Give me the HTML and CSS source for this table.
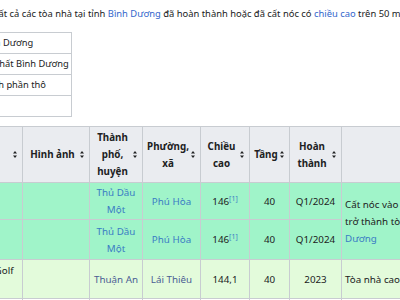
FILE: index.html
```html
<!DOCTYPE html>
<html lang="vi">
<head>
<meta charset="utf-8">
<link rel="stylesheet" href="styles.css">
</head>
<body>
<div class="page">
  <p class="intro">Tất cả các tòa nhà tại tỉnh <a href="#">Bình Dương</a> đã hoàn thành hoặc đã cất nóc có <a href="#">chiều cao</a> trên 50 m.</p>
  <table class="legend">
    <tr><td>Cao nhất Bình Dương</td></tr>
    <tr><td>Tòa nhà cao nhất Bình Dương</td></tr>
    <tr><td>Đã hoàn thành phần thô</td></tr>
    <tr><td></td></tr>
  </table>
  <table class="wikitable">
    <colgroup>
      <col class="c-name"><col class="c-img"><col class="c-city"><col class="c-ward"><col class="c-height"><col class="c-floor"><col class="c-done"><col class="c-note">
    </colgroup>
    <thead>
      <tr>
        <th><div class="th-in"><span class="th-t">Tên</span><svg class="sort" viewBox="0 0 4 7"><path d="M2 0 4 2.6H0z M2 7 4 4.4H0z"/></svg></div></th>
        <th><div class="th-in"><span class="th-t">Hình ảnh</span><svg class="sort" viewBox="0 0 4 7"><path d="M2 0 4 2.6H0z M2 7 4 4.4H0z"/></svg></div></th>
        <th><div class="th-in"><span class="th-t">Thành phố, huyện</span><svg class="sort" viewBox="0 0 4 7"><path d="M2 0 4 2.6H0z M2 7 4 4.4H0z"/></svg></div></th>
        <th><div class="th-in"><span class="th-t">Phường, xã</span><svg class="sort" viewBox="0 0 4 7"><path d="M2 0 4 2.6H0z M2 7 4 4.4H0z"/></svg></div></th>
        <th><div class="th-in"><span class="th-t">Chiều cao</span><svg class="sort" viewBox="0 0 4 7"><path d="M2 0 4 2.6H0z M2 7 4 4.4H0z"/></svg></div></th>
        <th><div class="th-in"><span class="th-t">Tầng</span><svg class="sort" viewBox="0 0 4 7"><path d="M2 0 4 2.6H0z M2 7 4 4.4H0z"/></svg></div></th>
        <th><div class="th-in"><span class="th-t">Hoàn thành</span><svg class="sort" viewBox="0 0 4 7"><path d="M2 0 4 2.6H0z M2 7 4 4.4H0z"/></svg></div></th>
        <th></th>
      </tr>
    </thead>
    <tbody>
      <tr class="tallest r1">
        <td class="name">Sora A</td>
        <td></td>
        <td><a href="#">Thủ Dầu Một</a></td>
        <td><a href="#">Phú Hòa</a></td>
        <td>146<sup><a href="#">[1]</a></sup></td>
        <td>40</td>
        <td>Q1/2024</td>
        <td class="note" rowspan="2">Cất nóc vào tháng 1/2024,<br>trở thành tòa nhà cao nhất Bình<br><a href="#">Dương</a></td>
      </tr>
      <tr class="tallest r2">
        <td class="name">Sora B</td>
        <td></td>
        <td><a href="#">Thủ Dầu Một</a></td>
        <td><a href="#">Phú Hòa</a></td>
        <td>146<sup><a href="#">[1]</a></sup></td>
        <td>40</td>
        <td>Q1/2024</td>
      </tr>
      <tr class="done r3">
        <td class="name">Emerald Golf<br>View</td>
        <td></td>
        <td><a class="visited" href="#">Thuận An</a></td>
        <td><a class="visited" href="#">Lái Thiêu</a></td>
        <td>144,1</td>
        <td>40</td>
        <td>2023</td>
        <td class="note">Tòa nhà cao nhất Thuận An</td>
      </tr>
      <tr class="r4">
        <td class="name"></td>
        <td><div class="thumb"></div></td>
        <td></td><td></td><td></td><td></td><td></td><td></td>
      </tr>
    </tbody>
  </table>
</div>
</body>
</html>
```

FILE: styles.css
```css
html, body {
  margin: 0;
  padding: 0;
  background: #ffffff;
  overflow: hidden;
}
body {
  width: 400px;
  height: 300px;
  font-family: "Noto Sans", "Open Sans", sans-serif;
  color: #202122;
}
.page {
  display: flex;
  flex-direction: column;
  align-items: flex-start;
}
a {
  color: #3366cc;
  text-decoration: none;
}
.intro {
  margin: 0 0 0 -6px;
  padding-top: 6px;
  font-size: 9.4px;
  line-height: 16px;
  white-space: nowrap;
}
.legend {
  margin: 10px 0 0 -65px;
  border-collapse: collapse;
  font-size: 9.3px;
}
.legend td {
  border: 1px solid #c8ccd1;
  height: 20px;
  padding: 0 2px 0 3px;
  line-height: 16px;
  white-space: nowrap;
}
.wikitable {
  margin: 9px 0 0 -60px;
  border-collapse: collapse;
  table-layout: fixed;
  width: 520px;
  font-size: 9.8px;
  line-height: 17px;
}
.c-name { width: 82px; }
.c-img { width: 67px; }
.c-city { width: 53px; }
.c-ward { width: 58px; }
.c-height { width: 49px; }
.c-floor { width: 40px; }
.c-done { width: 52px; }
.c-note { width: 119px; }
.wikitable th, .wikitable td {
  border: 1px solid #c8ccd1;
  padding: 1px 3px;
  text-align: center;
  vertical-align: middle;
}
.wikitable th {
  background: #eaecf0;
  font-weight: bold;
  height: 51px;
  padding: 2px 5px 2px 4px;
}
.th-in {
  display: flex;
  align-items: center;
  gap: 2px;
}
.th-t {
  flex: 1;
  text-align: center;
}
.sort {
  width: 4px;
  height: 7px;
  flex: none;
  fill: #202122;
}
.tallest td { background: #a0f4c9; }
.done td { background: #e3fbdb; }
.r1 td { height: 34px; }
.r2 td { height: 37px; }
.r3 td { height: 36px; }
.wikitable td.name {
  text-align: left;
  white-space: nowrap;
  padding-left: 13px;
}
.wikitable td.note {
  text-align: left;
  white-space: nowrap;
  padding-left: 3px;
}
.tallest a { color: #3a7cc4; }
.wikitable sup {
  font-size: 7px;
  line-height: 0;
  vertical-align: 4px;
}
a.visited { color: #4b5d94; }
.thumb {
  height: 20px;
  background: linear-gradient(#8f969d, #c9ced3);
  margin: 1px 0 0;
}
```
